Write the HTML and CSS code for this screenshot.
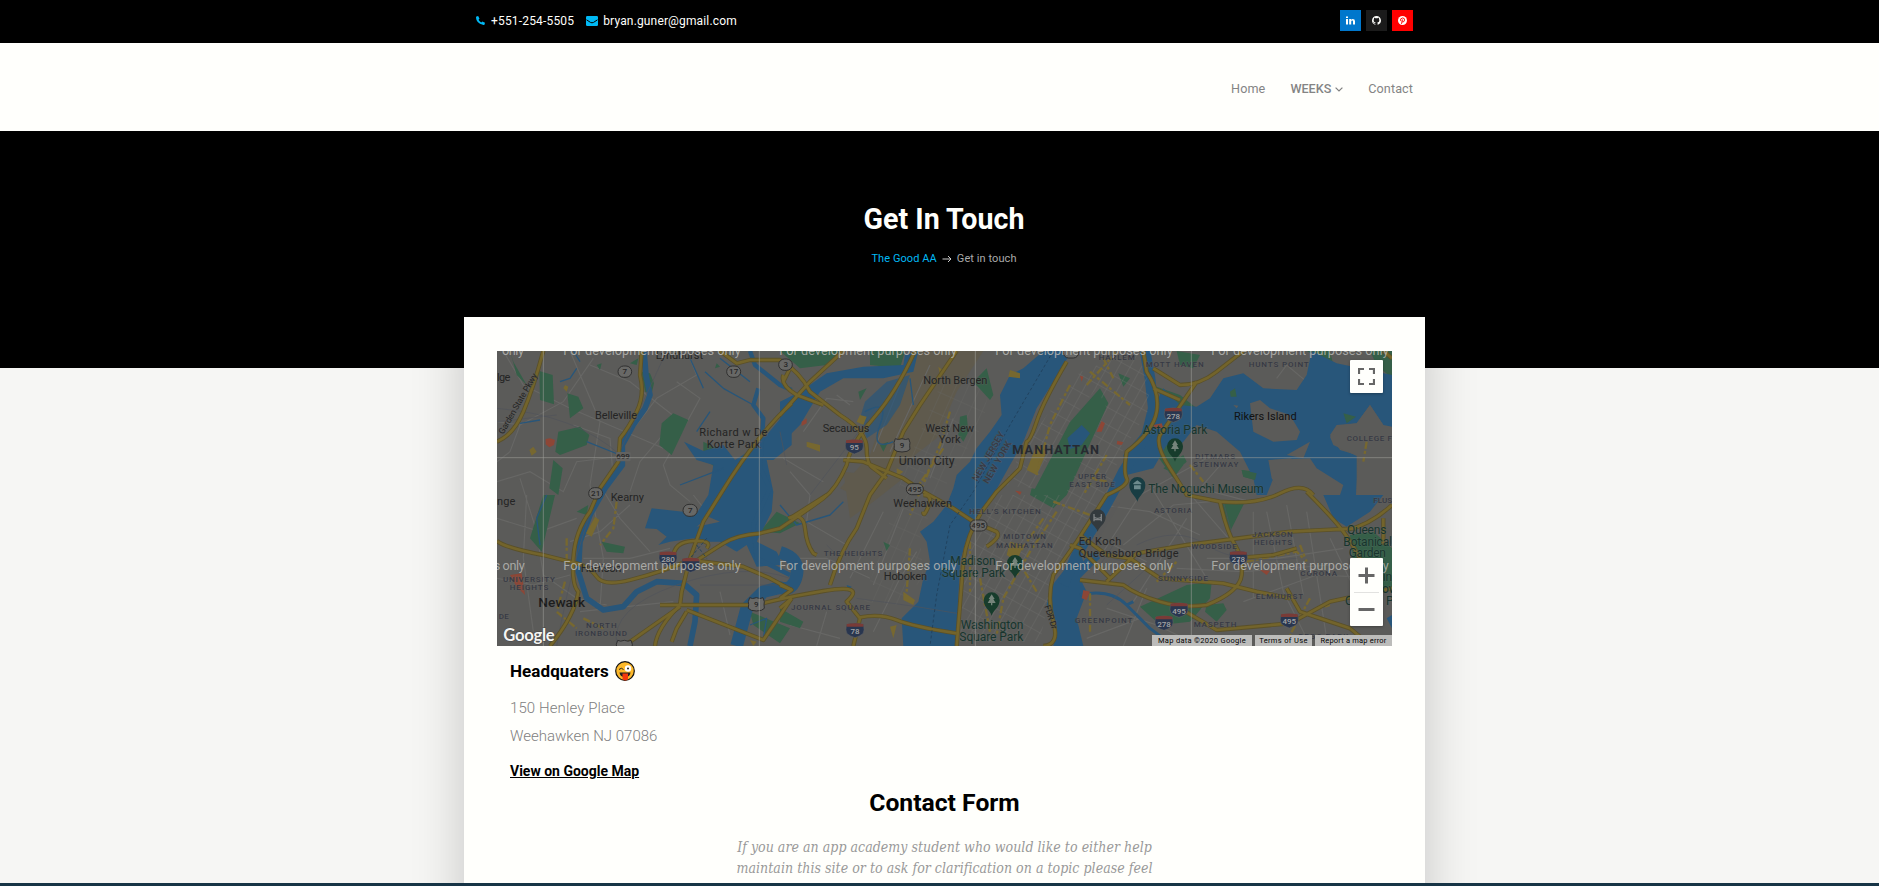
FILE: index.html
```html
<!DOCTYPE html>
<html lang="en">
<head>
<meta charset="utf-8">
<title>Get In Touch</title>
<link rel="stylesheet" href="styles.css">
</head>
<body>
<div class="page">
  <div class="topbar">
    <div class="wrap topbar-row">
      <div class="contacts">
        <span class="contact"><svg class="phone" viewBox="0 0 10 10"><path d="M.4.6 2.4 0 3.9 3 2.8 4.1Q3.8 6.1 5.9 7.2L7 6.1 10 7.6 9.4 9.6Q8.8 10 7.6 9.8Q.4 8.2 0 2Q0 1 .4.6Z"/></svg><span class="tel">+551-254-5505</span></span>
        <span class="contact"><svg class="mail" viewBox="0 0 12 10"><rect width="12" height="10" rx="1.2"/><path d="M.5 3.8 4.5 6.4Q6 7.2 7.500 6.400L11.500 3.800" fill="none" stroke="#000" stroke-width="1"/></svg><span class="email">bryan.guner@gmail.com</span></span>
      </div>
      <div class="social">
        <a class="chip linkedin"><svg viewBox="0 0 9 9"><path d="M0 3H2V8.500H0ZM0 .5H2V2.100H0ZM3.200 3H5V3.700Q5.600 2.900 6.800 2.900Q9 2.900 9 5.300V8.500H7V5.600Q7 4.500 6.200 4.500Q5.200 4.500 5.200 5.700V8.500H3.200Z"/></svg></a>
        <a class="chip github"><svg viewBox="0 0 16 16"><path d="M8 0C3.600 0 0 3.600 0 8c0 3.500 2.300 6.500 5.500 7.600.4.100.5-.2.500-.4v-1.400c-2.200.5-2.700-1-2.700-1-.4-.9-.9-1.200-.9-1.200-.7-.5.100-.5.100-.5.800.100 1.200.8 1.200.8.7 1.200 1.900.9 2.300.7.100-.5.300-.9.500-1.100-1.800-.2-3.600-.9-3.600-4 0-.9.300-1.600.8-2.100-.1-.2-.4-1 .1-2.100 0 0 .7-.2 2.200.8.600-.2 1.300-.3 2-.3s1.400.100 2 .3c1.500-1 2.200-.8 2.200-.8.4 1.100.2 1.900.1 2.100.5.600.8 1.300.8 2.100 0 3.100-1.900 3.700-3.700 3.900.3.300.6.800.6 1.500v2.200c0 .2.100.5.500.4C13.700 14.500 16 11.500 16 8c0-4.400-3.600-8-8-8z"/></svg></a>
        <a class="chip pinterest"><svg viewBox="0 0 16 16"><circle cx="8" cy="8" r="8"/><path d="M6.200 14 8 6.200M4.900 9Q3 4 8 3.500Q12 3.600 11.700 7Q11 11 8.400 10.600Q7.400 10.300 7.300 9.600" fill="none" stroke="#f00" stroke-width="1.700"/></svg></a>
      </div>
    </div>
  </div>
  <header class="header">
    <nav class="wrap nav">
      <a class="home">Home</a>
      <a class="weeks">WEEKS<svg viewBox="0 0 8 5"><path d="M.6.6 4 4 7.400.6"/></svg></a>
      <a class="contact-link">Contact</a>
    </nav>
  </header>
  <section class="banner">
    <h1>Get In Touch</h1>
    <p class="crumbs"><a>The Good AA</a><svg viewBox="0 0 10 8"><path d="M.5 4H9M6 1 9 4 6 7"/></svg><span>Get in touch</span></p>
  </section>
  <main class="card">
    <div class="map">
      <svg class="tiles" viewBox="21 18 2685 885">
        <defs>
          <g id="tree"><path class="pin" d="M0 28C-4 12-24 4-24-18A24 24 0 0 1 24-18C24 4 4 12 0 28Z"/><path d="M0-36 9-22H5L12-10H2V-3H-2V-10H-12L-5-22H-9Z" fill="#75847b"/></g>
          <g id="shield"><path d="M-25-18Q0-24 25-18Q30 0 24 10Q14 18 0 22Q-14 18-24 10Q-30 0-25-18Z" fill="#29364f" stroke="#666" stroke-width="1.500"/><path d="M-25-19Q0-24 25-19V-11H-25Z" fill="#793b37"/></g>
          <g id="us"><path d="M-20-20Q-12-15 0-20Q12-15 20-20L24-8Q22 0 24 12Q18 20 0 20Q-18 20-24 12Q-22 0-24-8Z" fill="#686866" stroke="#303030" stroke-width="3"/></g>
          <pattern id="grid" width="30" height="46" patternUnits="userSpaceOnUse" patternTransform="rotate(29)"><path d="M0 0H30M0 0V46" fill="none" stroke="#70706e" stroke-width="2.200"/></pattern>
          <pattern id="grid2" width="34" height="60" patternUnits="userSpaceOnUse" patternTransform="rotate(24)"><path d="M0 0H34M0 0V60" fill="none" stroke="#656563" stroke-width="2"/></pattern>
        </defs>
        <rect x="21" y="18" width="2685" height="885" fill="#5b5b59"/>
        <!-- built-up tint -->
        <path fill="#5f5a4d" d="M1290 18H1480L1400 140 1340 280 1210 380 1090 450 1050 430 1140 330 1200 150ZM1060 380 1240 400 1150 470 1080 520Z"/>
        <path fill="url(#grid2)" d="M1360 100 1500 90 1480 240 1400 360 1330 490 1290 560 1300 700 1220 780 1120 770 1190 560 1240 380Z"/>
        <!-- local streets -->
        <g class="street">
          <path d="M21 230 90 240 220 170 310 40M40 18 100 120 240 190 380 250 520 310M90 240 60 320 21 350M240 18 330 230 300 420 340 640 330 790M300 60 420 110 560 220M500 160 620 90 600 40 530 18M500 160 400 290M560 220 450 350 420 440M560 110 630 160 520 360 540 420 600 470M21 410 120 380 220 440 260 350 420 330M250 240 360 280 370 400M21 520 150 560 260 520M90 400 140 560 160 690 260 760 350 780M330 420 390 520 480 620M420 480 330 560 240 590M280 640 420 640 540 610M21 700 130 720 240 690M110 450 100 640 130 860M610 450 680 540 740 620M270 800 550 770M690 740 720 870M880 340 930 370 1000 410M940 260 1010 160 1090 170M900 380 960 450 950 530 1070 600M1040 150 1080 180M870 640 1010 640 1140 700M1180 500 1080 700M1240 490 1150 720M1150 860 1230 700 1280 620M900 840 1050 880M1010 800 980 903M1230 120 1150 320M1320 60 1200 320M1390 220 1320 400"/>
          <path d="M1840 620 1950 450 2150 340M1900 600 2050 480 2160 470M1840 480 1980 500 2130 570M1980 420 2150 700M2050 390 2250 620M2200 350 2130 430 2280 470M2290 500 2290 760M2330 500 2380 740 2460 900M2390 480 2440 750M2450 500 2510 880M2520 580 2640 830M2150 640 2360 640 2560 610M2060 670 2260 680 2520 660M2260 770 2480 690 2706 700M2090 520 1930 770M1850 790 2000 840 2130 903M2060 820 2180 770M1790 560 1970 650M2360 100 2390 60 2450 110 2500 100M2610 300 2630 450M2590 330 2706 320M2560 590 2706 600M1970 730 1900 903M1790 880 1950 820"/>
        </g>
        <!-- parks -->
        <g class="park">
          <path d="M60 18 80 90 110 120 70 50ZM148 78 188 90 192 178 150 165ZM232 145 265 155 280 190 240 220ZM205 260 270 245 298 270 290 300 210 330 196 320ZM190 345 218 370 205 450 178 430ZM455 80 480 85 492 115 485 145 465 140ZM515 235 550 205 595 225 545 330 508 300ZM320 60 335 55 330 75ZM420 55 445 40 440 60ZM160 450 195 450 155 620 120 580ZM335 590 405 605 400 625 350 620ZM260 500 295 480 290 510ZM680 55 690 65 675 70ZM640 290 640 340 680 370 680 310ZM810 560 860 500 930 535 870 565ZM870 18 1060 18 1010 60 930 70ZM1140 18 1245 18 1230 70 1140 60ZM1410 215 1430 210 1435 260 1420 290 1405 270ZM1450 110 1490 70 1510 150 1500 165ZM1105 140 1130 130 1110 165ZM1170 300 1195 290 1180 320ZM780 800 900 850 870 895 790 840ZM870 790 940 830 930 850 870 830Z"/>
          <path d="M1740 231 1830 130 1855 175 1730 450 1625 450ZM1625 430 1730 450 1690 490 1620 450ZM1885 85 1920 100 1900 125ZM2000 125 2070 150 2120 190 2090 250 2040 220ZM1965 265 2040 270 2080 360 2050 400 2000 330ZM2020 370 2080 330 2090 350 2050 385ZM2200 470 2265 470 2220 560 2190 490ZM1950 785 2090 720 2165 710 2160 760 2100 830 2010 840ZM2150 780 2200 775 2210 795 2180 830 2145 800ZM2255 375 2300 380 2295 405 2260 395ZM2220 140 2250 130 2240 155ZM2450 18 2520 18 2530 60ZM2640 18H2706V100L2660 60ZM2580 570 2650 560 2706 610V730H2600ZM2060 18 2130 30 2110 70 2070 60ZM1180 590 1200 600 1190 618ZM1390 830 1410 820 1400 850Z"/>
        </g>
        <!-- water -->
        <g class="water">
          <path d="M582 290 640 318 700 300 735 345 790 310 830 270 905 180 905 300 850 345 830 345 850 440 845 500 800 590 860 620 870 640 870 660 800 665 770 600 740 620 690 590 650 590 610 580 540 590 505 600 530 575 500 552 465 550 485 490 620 505 655 450 670 360 620 345Z"/>
          <path d="M870 170 930 140 1010 85 1120 65 1240 60 1245 30 1285 18 1270 80 1180 100 1060 100 990 140 960 190 930 240 870 300Z"/>
          <path d="M1125 170 1190 110 1260 90 1230 180 1190 240 1130 280 1110 220Z" opacity=".7"/>
          <path d="M1660 18 1600 70 1560 90 1530 150 1535 210 1500 260 1460 310 1440 350 1400 390 1390 430 1370 480 1330 530 1290 560 1310 590 1320 650 1300 700 1285 770 1235 820 1240 903 1400 903 1405 760 1410 650 1430 580 1475 510 1510 450 1560 360 1600 290 1640 190 1690 110 1745 18Z"/>
          <path d="M1690 690 1770 700 1830 640 1820 620 1750 640 1680 730 1670 780 1700 850 1690 903H1780L1760 820 1790 740 1770 700Z"/>
          <path d="M1900 330 1985 230 2005 160 2020 130 2070 180 2120 185 2160 160 2200 100 2260 85 2320 130 2420 135 2450 90 2465 18 2540 55 2706 90V260L2680 240 2640 180 2600 235 2540 240 2520 270 2550 315 2600 330V450H2540L2460 360 2400 340 2340 345 2350 400 2330 450 2300 450 2290 400 2250 320 2180 260 2120 240 2080 290 2050 320 2030 300 1990 370 1910 390Z"/>
          <path d="M2500 450 2530 520 2570 545 2640 500 2680 450ZM1732 280 1775 240 1800 265 1775 300 1740 312ZM1360 490 1385 490 1380 510ZM1070 720 1085 725 1075 740ZM2690 820 2706 810V850Z"/>
        </g>
        <path class="land" d="M2280 175 2310 165 2340 190 2400 210 2430 260 2420 285 2350 290 2290 260ZM2460 290 2440 340 2390 330ZM2335 345 2460 340 2480 370 2560 420 2550 450H2380L2345 400ZM2230 180 2245 182 2240 190ZM655 515 690 530 620 545Z"/>
        <path class="land" d="M2640 180 2680 240 2706 245V450H2598L2605 335 2530 300 2520 275 2560 240 2600 235Z"/>
        <path class="park" d="M2220 140 2235 130 2240 155 2222 155ZM2560 205 2598 215 2570 235ZM2255 375 2300 385 2295 405 2260 395Z"/>
        <g class="stream">
          <path d="M462 18 468 90 480 150 465 190 430 240 397 300 397 360 345 430 300 510 270 590 265 680 290 760 340 795 400 785 440 740 500 710 580 715 620 750 615 830 600 903" stroke-width="17"/>
          <path d="M870 622Q930 640 920 690T870 728L820 740 770 790 740 903" stroke-width="38"/>
          <path d="M780 18 795 60 870 120 905 135M805 130 790 180 820 220 810 370 840 430 790 540 800 640 900 690" stroke-width="13"/>
          <path d="M1965 18 1980 100 1990 190 1970 270 1900 380 1870 440 1820 530 1760 630 1720 720" stroke-width="32"/>
          <path d="M1770 750Q1860 730 1910 780T1980 850L2020 880M1910 780 1930 770" stroke-width="9"/>
          <path d="M170 450 140 520 150 600M260 70 240 100 210 110M250 18 270 50M90 235 150 225M290 290 390 330M600 40 640 130M645 80 700 130 790 180M690 40 780 110M660 200 620 260M870 480 920 540 1020 510 1060 470M1125 200Q1200 160 1170 240T1210 290M780 840 830 820 820 880M570 420 700 370M1260 100 1270 180" stroke-width="4"/>
        </g>
        <path class="land" d="M1820 560 1880 470 1890 475 1840 560 1780 650 1775 635Z" opacity=".85"/>
        <path fill="url(#grid)" d="M1770 80 1940 18 1970 100 1980 190 1890 330 1850 450 1740 590 1690 690 1650 890 1410 890 1430 600 1530 450 1620 450 1725 450 1850 190 1820 130 1740 230 1625 430 1540 420 1610 290Z"/>
        <!-- commercial areas -->
        <g class="shop">
          <path d="M225 120 235 125 230 140 220 130ZM130 305 140 320 125 332 118 315ZM315 515 328 525 305 575 288 565ZM1560 75 1590 85 1590 100 1555 95ZM1345 65 1365 80 1350 90ZM950 290 990 300 990 320 950 305ZM1110 210 1130 215 1120 240 1100 230ZM1220 370 1240 380 1220 395ZM1240 740 1275 765 1270 780 1240 765ZM1200 845 1220 840 1210 880ZM1640 300 1670 320 1640 390 1610 375ZM780 885 800 890 790 903ZM1560 590 1600 600 1580 650 1550 630Z"/>
          <path class="dash" d="M380 470 370 550 330 600M1380 200 1350 300 1290 440 1260 510M1360 310 1280 430M1260 610 1250 740M1740 120 1680 240 1640 390M1800 80 1920 180M1790 120 1880 20M1840 40 1870 100M1700 500 1620 620 1540 760 1520 870M1580 640 1640 740M1660 520 1590 620M1440 590 1440 740M1470 700 1500 860M230 580 230 650M225 710 200 800 260 850M1850 330 1780 450M1800 745 1800 860M2100 360 2140 410M2270 650 2420 620 2440 640M2000 710 2060 650M2460 760 2400 870M2460 800 2520 780M2630 290 2620 350M2430 600 2450 650M280 820 340 850M1690 470 1800 510M1850 410 1800 400"/>
        </g>
        <path fill="#8d4636" d="M167 282 180 280 195 285 192 300 178 307 167 298ZM60 690 95 685 105 750 80 725ZM935 230 950 220 950 235 935 243ZM1780 735 1800 740 1790 765 1775 760ZM1820 260 1835 228 1845 235 1835 260ZM1990 240 2015 235 2020 248 1995 252ZM1882 287 1900 292 1895 300 1880 298ZM2310 675 2340 677 2330 690ZM1575 437 1595 440 1590 450ZM1770 92 1780 95 1775 110Z"/>
        <g class="rail"><path d="M21 190Q260 210 390 330M21 230 200 210M530 18Q400 300 330 440T200 903M630 720 900 720M900 700Q760 650 560 720T380 900M870 260 890 360M1160 190 960 450M1940 600Q2060 540 2150 600T2420 640M1810 690 1870 600M2200 470 2250 660M1870 640 1970 670 1850 780M1100 760 1280 785 1400 805M1010 600 1080 670"/></g>
        <!-- highways: casing then fill -->
        <g class="casing"><g id="roads">
          <path d="M160 18Q130 130 100 200T21 290M455 18 450 90Q465 150 440 200T390 280L385 350 330 430 300 500Q255 560 250 640T265 740Q255 810 180 903M21 588Q50 610 160 630L260 655Q300 665 320 695T420 705Q520 680 600 645L760 665 840 700 905 735"/>
          <path d="M905 175Q800 270 690 450L640 530 600 640 575 740 570 780Q500 850 495 903M1275 18Q1220 140 1150 220T1070 360Q1040 430 1000 460T870 550L810 565Q740 570 700 595T600 660M870 210 960 110 1060 18"/>
          <path d="M690 18 740 55 780 45 870 45Q930 80 960 140L1050 210Q1130 260 1130 310T1150 370L1190 400M1060 345 1120 350 1240 400 1300 440 1390 490 1450 530 1520 560Q1535 575 1490 605M1400 18 1290 180 1240 260 1190 380 1140 450 1100 550Q1050 620 1020 720"/>
          <path d="M510 780H660L800 780Q870 760 1000 738T1070 770L1110 820 1090 903M1110 817Q1170 805 1220 825T1400 865M570 785 420 890 405 903M590 795 680 830 820 885 905 760M550 640Q550 590 610 588T650 610M870 720 905 735 870 760M895 520Q940 500 945 550T970 625L980 630"/>
          <path d="M880 90Q870 120 920 150L1000 180M870 790 905 760M900 70 880 110M1300 450Q1330 450 1315 485T1300 500M900 520 1010 450M545 890 560 850 590 800"/>
          <path d="M1730 50Q1660 170 1640 230T1610 290L1590 370 1520 440 1475 500Q1430 570 1420 650L1400 903M1960 18 1970 80Q2010 140 2000 200T1910 320Q1900 380 1910 400T1850 450L1760 590 1690 690Q1670 760 1690 830T1660 903M1990 70 2070 120Q2130 120 2180 80L2260 18M1990 130 2070 165M2120 110 2010 270Q1995 300 2040 370T2090 450L2190 470Q2300 480 2370 445T2470 450"/>
          <path d="M2190 470Q2210 560 2235 600T2255 690 2150 780Q2080 790 2010 770T1900 720L1770 705M1850 710 1940 625 2090 600 2400 560 2600 550M1740 600 1770 610 1860 700M1770 570 1850 630 1920 640 2010 700 2200 715 2300 740 2400 760M2070 790 2180 855 2400 835 2520 770 2706 730M2450 440Q2530 520 2560 560T2620 660M2706 480Q2640 540 2570 555M2680 520V600M2390 730 2430 800 2580 850 2640 900M2230 640 2350 630 2420 610M2706 40 2680 18"/>
        </g></g>
        <use href="#roads" class="road-fill"/>
        <path d="M1690 18 1560 240 1450 440 1380 540 1340 750 1320 903M620 600 650 640M650 580 600 640" fill="none" stroke="#1f3f5a" stroke-width="2.500" stroke-dasharray="9 7"/>
        <!-- route badges -->
        <g class="ovals">
          <rect x="384" y="63" width="41" height="34" rx="17"/><rect x="710" y="63" width="42" height="34" rx="17"/><rect x="866" y="42" width="41" height="34" rx="17"/><rect x="296" y="428" width="42" height="34" rx="17"/><rect x="579" y="478" width="43" height="36" rx="18"/><rect x="1249" y="416" width="51" height="33" rx="16"/><rect x="1440" y="525" width="51" height="33" rx="16"/><rect x="1720" y="7" width="46" height="32" rx="16"/>
          <rect x="378" y="321" width="44" height="28" rx="4" stroke="none" fill="#626260"/>
        </g>
        <use href="#us" x="1236" y="301"/><use href="#us" x="799" y="778"/><use href="#us" x="403" y="906"/>
        <use href="#shield" x="534" y="641"/><use href="#shield" x="602" y="660"/><use href="#shield" x="1093" y="305"/><use href="#shield" x="1095" y="856"/><use href="#shield" x="2050" y="210"/><use href="#shield" x="2245" y="640"/><use href="#shield" x="2067" y="795"/><use href="#shield" x="2022" y="834"/><use href="#shield" x="2398" y="827"/>
        <g class="badge"><text x="404" y="88">7</text><text x="731" y="88">17</text><text x="887" y="67">3</text><text x="317" y="453">21</text><text x="601" y="504">7</text><text x="1274" y="441">495</text><text x="1465" y="550">495</text><text x="1236" y="310">9</text><text x="799" y="787">9</text><text x="399" y="343">699</text></g>
        <g class="badge light"><text x="534" y="652">280</text><text x="1093" y="316">95</text><text x="1095" y="867">78</text><text x="2050" y="221">278</text><text x="2245" y="651">278</text><text x="2067" y="806">495</text><text x="2022" y="845">278</text><text x="2398" y="838">495</text></g>
        <!-- pins -->
        <use href="#tree" x="2055" y="322"/><use href="#tree" x="1575" y="672"/><use href="#tree" x="1505" y="784"/>
        <path d="M1942 470C1938 453 1918 445 1918 420A24 24 0 0 1 1966 420C1966 445 1946 453 1942 470Z" fill="#183d43"/><path d="M1930 415 1942 406 1954 415V418H1930ZM1932 421H1952V433H1932Z" fill="#6c8a8d"/>
        <path d="M1823 560C1819 545 1799 537 1799 517A24 24 0 0 1 1847 517C1847 537 1827 545 1823 560Z" fill="#333a3e"/><path d="M1812 529V507M1834 529V507M1812 516Q1823 524 1834 516M1810 524H1836" fill="none" stroke="#7c8082" stroke-width="4"/>
        <!-- place names -->
        <g class="place">
          <text x="497" y="43" textLength="142">Lyndhurst</text><text x="21" y="107" textLength="40">lge</text><text x="315" y="221" textLength="126">Belleville</text><text x="628" y="274" textLength="204">Richard w De</text><text x="650" y="310" textLength="162">Korte Park</text>
          <text x="21" y="480" textLength="55">nge</text><text x="362" y="467" textLength="100">Kearny</text><text x="272" y="680" textLength="122">Harrison</text>
          <text x="1300" y="118" textLength="192">North Bergen</text><text x="998" y="261" textLength="140">Secaucus</text><text x="1306" y="261" textLength="146">West New</text><text x="1346" y="293" textLength="66">York</text><text x="1226" y="361" textLength="168" class="big">Union City</text><text x="1210" y="485" textLength="176">Weehawken</text><text x="1181" y="704" textLength="130">Hoboken</text>
          <text x="1766" y="599" textLength="128">Ed Koch</text><text x="1766" y="637" textLength="300">Queensboro Bridge</text>
          <text transform="translate(40 269) rotate(-60)" class="way" textLength="205">Garden State Pkwy</text>
          <text transform="translate(1663 784) rotate(72)" class="way" textLength="74">FDR Dr</text>
        </g>
        <text x="145" y="785" class="newark" textLength="140">Newark</text>
        <text x="2232" y="225" class="rikers" textLength="188">Rikers Island</text>
        <g class="poi">
          <text x="1958" y="268" textLength="194">Astoria Park</text><text x="1975" y="443" textLength="346">The Noguchi Museum</text>
          <text x="1381" y="660" textLength="136">Madison</text><text x="1355" y="697" textLength="190">Square Park</text><text x="1412" y="853" textLength="188">Washington</text><text x="1408" y="889" textLength="192">Square Park</text>
          <text x="2571" y="566" textLength="118">Queens</text><text x="2560" y="602" textLength="146">Botanical</text><text x="2576" y="637" textLength="112">Garden</text><text x="2565" y="780">C</text><text x="2678" y="708">in</text><text x="2676" y="745">ow</text><text x="2688" y="780">P</text>
        </g>
        <g class="area">
          <text x="39" y="712" textLength="156">UNIVERSITY</text><text x="59" y="736" textLength="116">HEIGHTS</text><text x="26" y="821" textLength="30">DE</text><text x="288" y="848" textLength="92">NORTH</text><text x="255" y="872" textLength="156">IRONBOUND</text>
          <text x="1001" y="632" textLength="176">THE HEIGHTS</text><text x="903" y="794" textLength="237">JOURNAL SQUARE</text><text x="1438" y="508" textLength="214">HELL'S KITCHEN</text><text x="1540" y="583" textLength="128">MIDTOWN</text><text x="1518" y="608" textLength="170">MANHATTAN</text>
          <text x="1826" y="45" textLength="108">HARLEM</text><text x="1967" y="67" textLength="174">MOTT HAVEN</text><text x="2276" y="65" textLength="180">HUNTS POINT</text><text x="2570" y="289" textLength="136">COLLEGE F</text><text x="2115" y="341" textLength="120">DITMARS</text><text x="2109" y="366" textLength="136">STEINWAY</text><text x="1764" y="401" textLength="84">UPPER</text><text x="1738" y="426" textLength="136">EAST SIDE</text>
          <text x="1992" y="504" textLength="114">ASTORIA</text><text x="2286" y="576" textLength="122">JACKSON</text><text x="2291" y="600" textLength="115">HEIGHTS</text><text x="2104" y="611" textLength="136">WOODSIDE</text><text x="2004" y="709" textLength="150">SUNNYSIDE</text><text x="2431" y="693" textLength="110">CORONA</text><text x="2297" y="761" textLength="142">ELMHURST</text><text x="1755" y="833" textLength="172">GREENPOINT</text><text x="2111" y="845" textLength="128">MASPETH</text><text x="2425" y="881" textLength="150">REGO PARK</text><text x="2650" y="473" textLength="56">FLUS</text>
          <text transform="translate(1461 410) rotate(-60)" class="state" textLength="165">NEW JERSEY</text><text transform="translate(1494 418) rotate(-60)" class="state" textLength="142">NEW YORK</text>
        </g>
        <text x="1567" y="327" class="manhattan" textLength="260">MANHATTAN</text>
        <path class="seams" d="M160 18V903M808 18V903M1456 18V903M2104 18V903M21 338H2706"/>
        <g class="mark">
          <text x="11" y="674" textLength="93">s only</text><text x="220" y="674" textLength="532">For development purposes only</text><text x="868" y="674" textLength="532">For development purposes only</text><text x="1516" y="674" textLength="532">For development purposes only</text><text x="2164" y="674" textLength="532">For development purposes only</text>
          <text x="36" y="29" textLength="66">only</text><text x="220" y="29" textLength="532">For development purposes only</text><text x="868" y="29" textLength="532">For development purposes only</text><text x="1516" y="29" textLength="532">For development purposes only</text><text x="2164" y="29" textLength="532">For development purposes only</text>
        </g>
        <text x="40" y="887" class="brand" textLength="154">Google</text>
      </svg>
      <div class="ctl full"><svg viewBox="0 0 17 17"><path d="M1 6V1H6M11 1H16V6M16 11V16H11M6 16H1V11"/></svg></div>
      <div class="ctl zoomer"><svg viewBox="0 0 17 17"><path d="M.5 8.500H16.500M8.500.5V16.500"/></svg><i></i><svg viewBox="0 0 17 17"><path d="M.5 8.500H16.500"/></svg></div>
      <div class="legal"><span class="l1">Map data ©2020 Google</span><span class="l2">Terms of Use</span><span class="l3">Report a map error</span></div>
    </div>
    <div class="address">
      <h2>Headquaters <svg viewBox="0 0 20 20"><circle cx="10" cy="10" r="9.300" fill="#fdb92a" stroke="#111" stroke-width="1.200"/><circle cx="13" cy="7.500" r="3.200" fill="#fff"/><circle cx="13" cy="7.500" r="1" fill="#222"/><path d="M4 8.500Q6.500 6 8.500 8.500" fill="none" stroke="#222"/><path d="M4.500 11.500H15.500Q15 16 10 16T4.500 11.500Z" fill="#222"/><path d="M7.500 12.500H13V17Q13 19.500 10.300 19.500T7.500 17Z" fill="#f5380c"/></svg></h2>
      <p class="a1">150 Henley Place</p>
      <p class="a2">Weehawken NJ 07086</p>
      <a class="view">View on Google Map</a>
    </div>
    <h3>Contact Form</h3>
    <p class="intro">If you are an app academy student who would like to either help<br>maintain this site or to ask for clarification on a topic please feel</p>
  </main>
  <div class="edge"></div>
</div>
</body>
</html>
```
FILE: styles.css
```css
* { box-sizing: border-box; }
body { margin: 0; background: #f6f6f4; font-family: Roboto, "Liberation Sans", sans-serif; }
h1, h2, h3, p { margin: 0; }
.page { height: 886px; overflow: hidden; position: relative; }
.wrap { width: 961px; margin: 0 auto 0 464px; padding: 0 12px; }
.topbar { background: #000; height: 43px; }
.topbar-row { display: flex; justify-content: space-between; padding-top: 10px; }
.contacts { display: flex; gap: 12px; height: 21px; align-items: center; color: #fffffc; font-size: 12px; }
.contact { display: flex; align-items: center; }
.contact svg { fill: #00b9f5; }
.phone { width: 9px; height: 9px; margin-right: 6px; }
.mail { width: 12px; height: 10px; margin-right: 5px; }
.tel { letter-spacing: .18px; }
.email { letter-spacing: .15px; }
.social { display: flex; gap: 5px; }
.chip { width: 21px; height: 21px; display: grid; place-items: center; }
.chip svg { width: 9px; height: 9px; fill: #fffffc; }
.linkedin { background: #0077cc; }
.github { background: #1b1b1b; }
.pinterest { background: #f00; }
.header { background: #fffffc; height: 88px; }
.nav { display: flex; justify-content: flex-end; align-items: center; gap: 25px; height: 88px; padding-top: 3px; font-size: 12.6px; font-weight: 500; color: #848484; }
.home, .contact-link { font-weight: 400; letter-spacing: .1px; }
.weeks svg { width: 8px; height: 5px; margin: 0 0 1px 4px; fill: none; stroke: #808080; stroke-width: 1.2; }
.banner { background: #000; height: 237px; padding-top: 68px; text-align: center; padding-left: 9px; color: #fffffc; }
.banner h1 { font-size: 28.6px; line-height: 40px; font-weight: 700; }
.crumbs { display: flex; justify-content: center; align-items: center; font-size: 11px; line-height: 16px; margin-top: 12px; letter-spacing: .08px; color: #aaa; }
.crumbs a { color: #00b9f5; }
.crumbs svg { width: 10px; height: 8px; margin: 0 5px; fill: none; stroke: #ccc; }
.card { width: 961px; margin: -51px 0 0 464px; height: 620px; position: relative; background: #fffffc; padding: 34px 33px; box-shadow: 0 0 50px rgba(0, 0, 0, .2); }
.map { position: relative; width: 895px; height: 295px; }
.tiles { display: block; width: 895px; height: 295px; }
.street { fill: none; stroke: #676765; stroke-width: 3.5; }
.park { fill: #355f48; }
.water { fill: #28567a; }
.land { fill: #5b5b59; }
.stream { fill: none; stroke: #28567a; stroke-linejoin: round; }
.shop { fill: #776830; }
.dash { fill: none; stroke: #776830; stroke-width: 7; stroke-dasharray: 22 6 9 10; }
.rail { fill: none; stroke: #50535a; stroke-width: 2; }
#roads path { fill: none; stroke-linejoin: round; }
.casing { stroke: #5a5029; stroke-width: 13; }
.road-fill { stroke: #73642b; stroke-width: 8; }
.ovals { fill: #686866; stroke: #303030; stroke-width: 3; }
.badge { font-size: 24px; font-weight: 500; text-anchor: middle; fill: #262626; }
.light { fill: #a5a5a5; font-size: 24px; }
.pin { fill: #173c2c; }
.tiles text { white-space: pre; }
.place { font-size: 33px; fill: #242424; stroke: #5b5b59; stroke-width: 4; paint-order: stroke; stroke-opacity: .5; }
.place .big { font-size: 37px; }
.place .way { font-size: 26px; }
.newark { font-size: 41px; font-weight: 500; fill: #1d1d1d; }
.rikers { font-size: 33px; fill: #111; }
.poi { font-size: 36px; fill: #17342d; stroke: #62706a; stroke-width: 3; paint-order: stroke; stroke-opacity: .35; }
.area { font-size: 24px; font-weight: 500; fill: #363944; stroke: #62625f; stroke-width: 3; paint-order: stroke; stroke-opacity: .5; }
.area .state { font-size: 27px; }
.manhattan { font-size: 38px; font-weight: 700; fill: #272a30; }
.seams { fill: none; stroke: #a0a09c; stroke-opacity: .55; stroke-width: 3; }
.mark { font-size: 38px; fill: #b8b8b4; fill-opacity: .85; }
.brand { font-family: Lato, sans-serif; font-size: 50px; font-weight: 700; fill: #f4f4f2; stroke: #444; stroke-width: 3; paint-order: stroke; }
.ctl { position: absolute; left: 853px; width: 33px; background: #fffffc; border-radius: 1px; display: flex; flex-direction: column; align-items: center; box-shadow: 0 1px 3px rgba(0, 0, 0, .3); }
.ctl svg { width: 17px; height: 17px; fill: none; stroke: #666; stroke-width: 2.2; }
.full { top: 9px; height: 33px; justify-content: center; }
.zoomer { top: 207px; height: 68px; justify-content: center; gap: 8px; }
.zoomer svg { stroke-width: 3; }
.zoomer i { width: 25px; height: 1px; background: #e2e2e0; flex: none; }
.legal { position: absolute; right: 0; bottom: 0; height: 11px; display: flex; gap: 3px; font-size: 7.5px; line-height: 12px; color: #000; }
.legal span { background: #bcbcba; text-align: center; white-space: nowrap; }
.legal .l1 { width: 100px; letter-spacing: .3px; }
.legal .l2 { width: 57px; letter-spacing: .35px; }
.legal .l3 { width: 77px; letter-spacing: .2px; }
.address { padding: 13px 13px 0; height: 136px; }
.address h2 { font-size: 17px; line-height: 24px; font-weight: 700; letter-spacing: .08px; display: flex; align-items: center; gap: 6px; }
.address h2 svg { width: 20px; height: 20px; }
.address p { font-size: 15px; line-height: 28px; font-weight: 300; color: #808080; }
.address .a1 { margin-top: 11px; letter-spacing: .1px; }
.view { display: block; font-size: 14px; line-height: 20px; margin-top: 11px; font-weight: 700; text-decoration: underline; }
.card h3 { font-size: 24.7px; line-height: 32px; font-weight: 700; text-align: center; margin-top: 5px; }
.intro { font: italic 14px/21px "DejaVu Serif Condensed", "DejaVu Serif", serif; letter-spacing: .04px; color: #999; text-align: center; margin-top: 18px; white-space: nowrap; }
.edge { position: absolute; left: 0; right: 0; bottom: 0; height: 3px; background: #173546; }
```
